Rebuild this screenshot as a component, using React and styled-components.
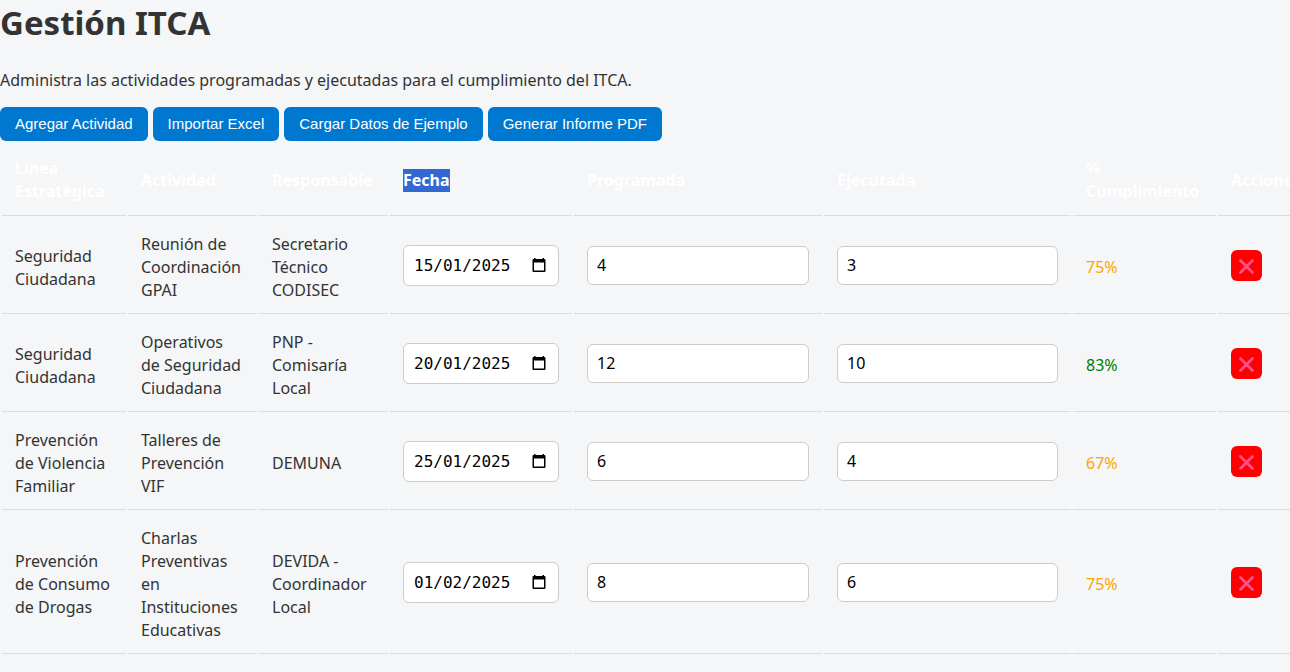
import React, { useState } from "react";
import styled, { createGlobalStyle } from "styled-components";

const GlobalStyle = createGlobalStyle`
  *, *::before, *::after { box-sizing: border-box; }
  body {
    margin: 0;
    background: #f4f6f8;
    color: #333;
    font-family: "Noto Sans", "Open Sans", sans-serif;
    font-size: 16px;
    line-height: 23px;
  }
`;

const Title = styled.h1`
  margin: 0 0 23px;
  font-size: 33px;
  line-height: 46px;
  font-weight: 700;
`;

const Intro = styled.p`
  margin: 0 0 15px;
`;

const Toolbar = styled.div`
  display: flex;
  flex-wrap: wrap;
  gap: 5px;
`;

const ActionButton = styled.button`
  height: 34px;
  padding: 0 15px 2px;
  border: 0;
  border-radius: 6px;
  background: #0078d0;
  color: #fff;
  font-family: "Liberation Sans", Arial, sans-serif;
  font-size: 15px;
  cursor: pointer;
`;

const Table = styled.table`
  width: 100%;
  min-width: 1340px;
  table-layout: fixed;
  border-collapse: separate;
  border-spacing: 2px;
`;

const Column = styled.col`
  width: ${({ $width }) => $width || "auto"};
`;

const HeadCell = styled.th`
  padding: 14px 13px 12px;
  border-bottom: 1px solid #dadcdf;
  color: #fff;
  font-weight: 700;
  text-align: left;
`;

const Cell = styled.td`
  padding: 15px 13px 11px;
  border-bottom: 1px solid #dadcdf;
`;

const ControlCell = styled(Cell)`
  padding: 13px;
`;

const Highlight = styled.mark`
  display: inline-block;
  background: #3367d1;
  color: #fff;
`;

const Field = styled.input`
  display: block;
  width: 100%;
  height: 39px;
  padding: 0 9px 2px;
  border: 1px solid #ccc;
  border-radius: 6px;
  background: #fff;
  color: #000;
  font: inherit;
  appearance: textfield;
`;

const DateBox = styled.div`
  display: flex;
  align-items: center;
  height: 41px;
  padding: 0 12px 0 10px;
  border: 1px solid #ccc;
  border-radius: 6px;
  background: #fff;
`;

const DateInput = styled.input`
  flex: 1;
  min-width: 0;
  padding: 0;
  border: 0;
  outline: 0;
  background: transparent;
  color: #000;
  font-family: "DejaVu Sans Mono", monospace;
  font-size: 16px;
`;

const PickerButton = styled.button`
  display: flex;
  padding: 0;
  border: 0;
  background: none;
  cursor: pointer;
`;

const Percent = styled.span`
  color: ${({ $good }) => ($good ? "green" : "orange")};
`;

const DeleteButton = styled.button`
  display: flex;
  align-items: center;
  justify-content: center;
  width: 31px;
  height: 31px;
  padding: 0;
  border: 0;
  border-radius: 6px;
  background: #f00;
  cursor: pointer;
`;

const CalendarIcon = () => (
  <svg width="14" height="17" viewBox="0 0 14 17" aria-hidden="true">
    <path
      fill="#000"
      fillRule="evenodd"
      d="M2 1h1.500v1h7V1H12v1h0.500a1 1 0 0 1 1 1v11a1 1 0 0 1-1 1h-11a1 1 0 0 1-1-1V3a1 1 0 0 1 1-1H2zM2 5.500v8h10v-8z"
    />
  </svg>
);

const CrossIcon = () => (
  <svg width="17" height="19" viewBox="0 0 17 19" aria-hidden="true">
    <path d="M2.500 4.500l12 12M14.500 4.500l-12 12" stroke="#f8528c" strokeWidth="2.800" strokeLinecap="round" />
  </svg>
);

const columns = [
  { label: "Línea Estratégica", width: "124px" },
  { label: "Actividad", width: "129px" },
  { label: "Responsable", width: "129px" },
  { label: "Fecha", width: "182px", highlighted: true },
  { label: "Programada", width: "248px" },
  { label: "Ejecutada", width: "247px" },
  { label: "% Cumplimiento", width: "143px" },
  { label: "Acciones" },
];

const initialRows = [
  { id: 1, line: "Seguridad Ciudadana", activity: "Reunión de Coordinación GPAI", owner: "Secretario Técnico CODISEC", date: "15/01/2025", planned: 4, done: 3 },
  { id: 2, line: "Seguridad Ciudadana", activity: "Operativos de Seguridad Ciudadana", owner: "PNP - Comisaría Local", date: "20/01/2025", planned: 12, done: 10 },
  { id: 3, line: "Prevención de Violencia Familiar", activity: "Talleres de Prevención VIF", owner: "DEMUNA", date: "25/01/2025", planned: 6, done: 4 },
  { id: 4, line: "Prevención de Consumo de Drogas", activity: "Charlas Preventivas en Instituciones Educativas", owner: "DEVIDA - Coordinador Local", date: "01/02/2025", planned: 8, done: 6 },
];

const ActivityRow = ({ row, onChange, onDelete }) => {
  const percent = row.planned > 0 ? Math.round((row.done / row.planned) * 100) : 0;
  const edit = (key) => (event) => onChange(row.id, key, event.target.value);
  return (
    <tr>
      <Cell>{row.line}</Cell>
      <Cell>{row.activity}</Cell>
      <Cell>{row.owner}</Cell>
      <ControlCell>
        <DateBox>
          <DateInput aria-label={`Fecha: ${row.activity}`} value={row.date} onChange={edit("date")} />
          <PickerButton type="button" aria-label="Abrir calendario">
            <CalendarIcon />
          </PickerButton>
        </DateBox>
      </ControlCell>
      <ControlCell>
        <Field type="number" aria-label={`Programada: ${row.activity}`} value={row.planned} onChange={edit("planned")} />
      </ControlCell>
      <ControlCell>
        <Field type="number" aria-label={`Ejecutada: ${row.activity}`} value={row.done} onChange={edit("done")} />
      </ControlCell>
      <Cell>
        <Percent $good={percent >= 80}>{percent}%</Percent>
      </Cell>
      <ControlCell>
        <DeleteButton type="button" aria-label="Eliminar actividad" onClick={() => onDelete(row.id)}>
          <CrossIcon />
        </DeleteButton>
      </ControlCell>
    </tr>
  );
};

export default function App() {
  const [rows, setRows] = useState(initialRows);
  const change = (id, key, value) =>
    setRows((list) => list.map((row) => (row.id === id ? { ...row, [key]: value } : row)));
  const remove = (id) => setRows((list) => list.filter((row) => row.id !== id));

  return (
    <main>
      <GlobalStyle />
      <Title>Gestión ITCA</Title>
      <Intro>Administra las actividades programadas y ejecutadas para el cumplimiento del ITCA.</Intro>
      <Toolbar>
        <ActionButton type="button">Agregar Actividad</ActionButton>
        <ActionButton type="button">Importar Excel</ActionButton>
        <ActionButton type="button">Cargar Datos de Ejemplo</ActionButton>
        <ActionButton type="button">Generar Informe PDF</ActionButton>
      </Toolbar>
      <Table>
        <colgroup>
          {columns.map((column) => (
            <Column key={column.label} $width={column.width} />
          ))}
        </colgroup>
        <thead>
          <tr>
            {columns.map((column) => (
              <HeadCell key={column.label} scope="col">
                {column.highlighted ? <Highlight>{column.label}</Highlight> : column.label}
              </HeadCell>
            ))}
          </tr>
        </thead>
        <tbody>
          {rows.map((row) => (
            <ActivityRow key={row.id} row={row} onChange={change} onDelete={remove} />
          ))}
        </tbody>
      </Table>
    </main>
  );
}
